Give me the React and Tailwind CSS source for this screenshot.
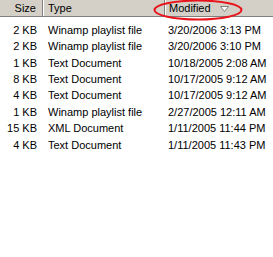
const files = [
  { size: "2 KB", type: "Winamp playlist file", modified: "3/20/2006 3:13 PM" },
  { size: "2 KB", type: "Winamp playlist file", modified: "3/20/2006 3:10 PM" },
  { size: "1 KB", type: "Text Document", modified: "10/18/2005 2:08 AM" },
  { size: "8 KB", type: "Text Document", modified: "10/17/2005 9:12 AM" },
  { size: "4 KB", type: "Text Document", modified: "10/17/2005 9:12 AM" },
  { size: "1 KB", type: "Winamp playlist file", modified: "2/27/2005 12:11 AM" },
  { size: "15 KB", type: "XML Document", modified: "1/11/2005 11:44 PM" },
  { size: "4 KB", type: "Text Document", modified: "1/11/2005 11:43 PM" },
];

function Divider() {
  return (
    <div className="flex h-full shrink-0">
      <div className="w-px h-full bg-[#808080]" />
      <div className="w-px h-full bg-white" />
    </div>
  );
}

export default function App() {
  return (
    <div className="relative w-[273px] h-[257px] bg-white text-[11px] text-black overflow-hidden font-['Liberation_Sans',Arial,sans-serif]">
      {/* header */}
      <div className="flex h-[17px] bg-[#d4d0c8] border-b border-[#808080] leading-none">
        <div className="w-[42px] flex items-center justify-end pr-[6px]">Size</div>
        <Divider />
        <div className="w-[120px] flex items-center pl-[4px]">Type</div>
        <Divider />
        <div className="flex-1 flex items-center pl-[3px] gap-[9px]">
          <span>Modified</span>
          <svg width="9" height="6" viewBox="0 0 9 6" className="mt-[1px]">
            <path d="M0.5 0.5 H8.5 L4.5 5.5 Z" fill="white" stroke="#808080" strokeWidth="1" />
          </svg>
        </div>
      </div>

      {/* rows */}
      <div className="pt-[5px]">
        {files.map((f, i) => (
          <div key={i} className="flex h-[16.43px] items-center leading-none">
            <div className="w-[37px] text-right">{f.size}</div>
            <div className="w-[130px] pl-[11px]">{f.type}</div>
            <div className="pl-[1px] whitespace-nowrap">{f.modified}</div>
          </div>
        ))}
      </div>

      {/* red highlight circle */}
      <svg className="absolute left-[153px] top-0" width="90" height="22" viewBox="0 0 90 22">
        <ellipse cx="45" cy="10" rx="43.5" ry="9.5" fill="none" stroke="#e8141c" strokeWidth="2" />
      </svg>
    </div>
  );
}
